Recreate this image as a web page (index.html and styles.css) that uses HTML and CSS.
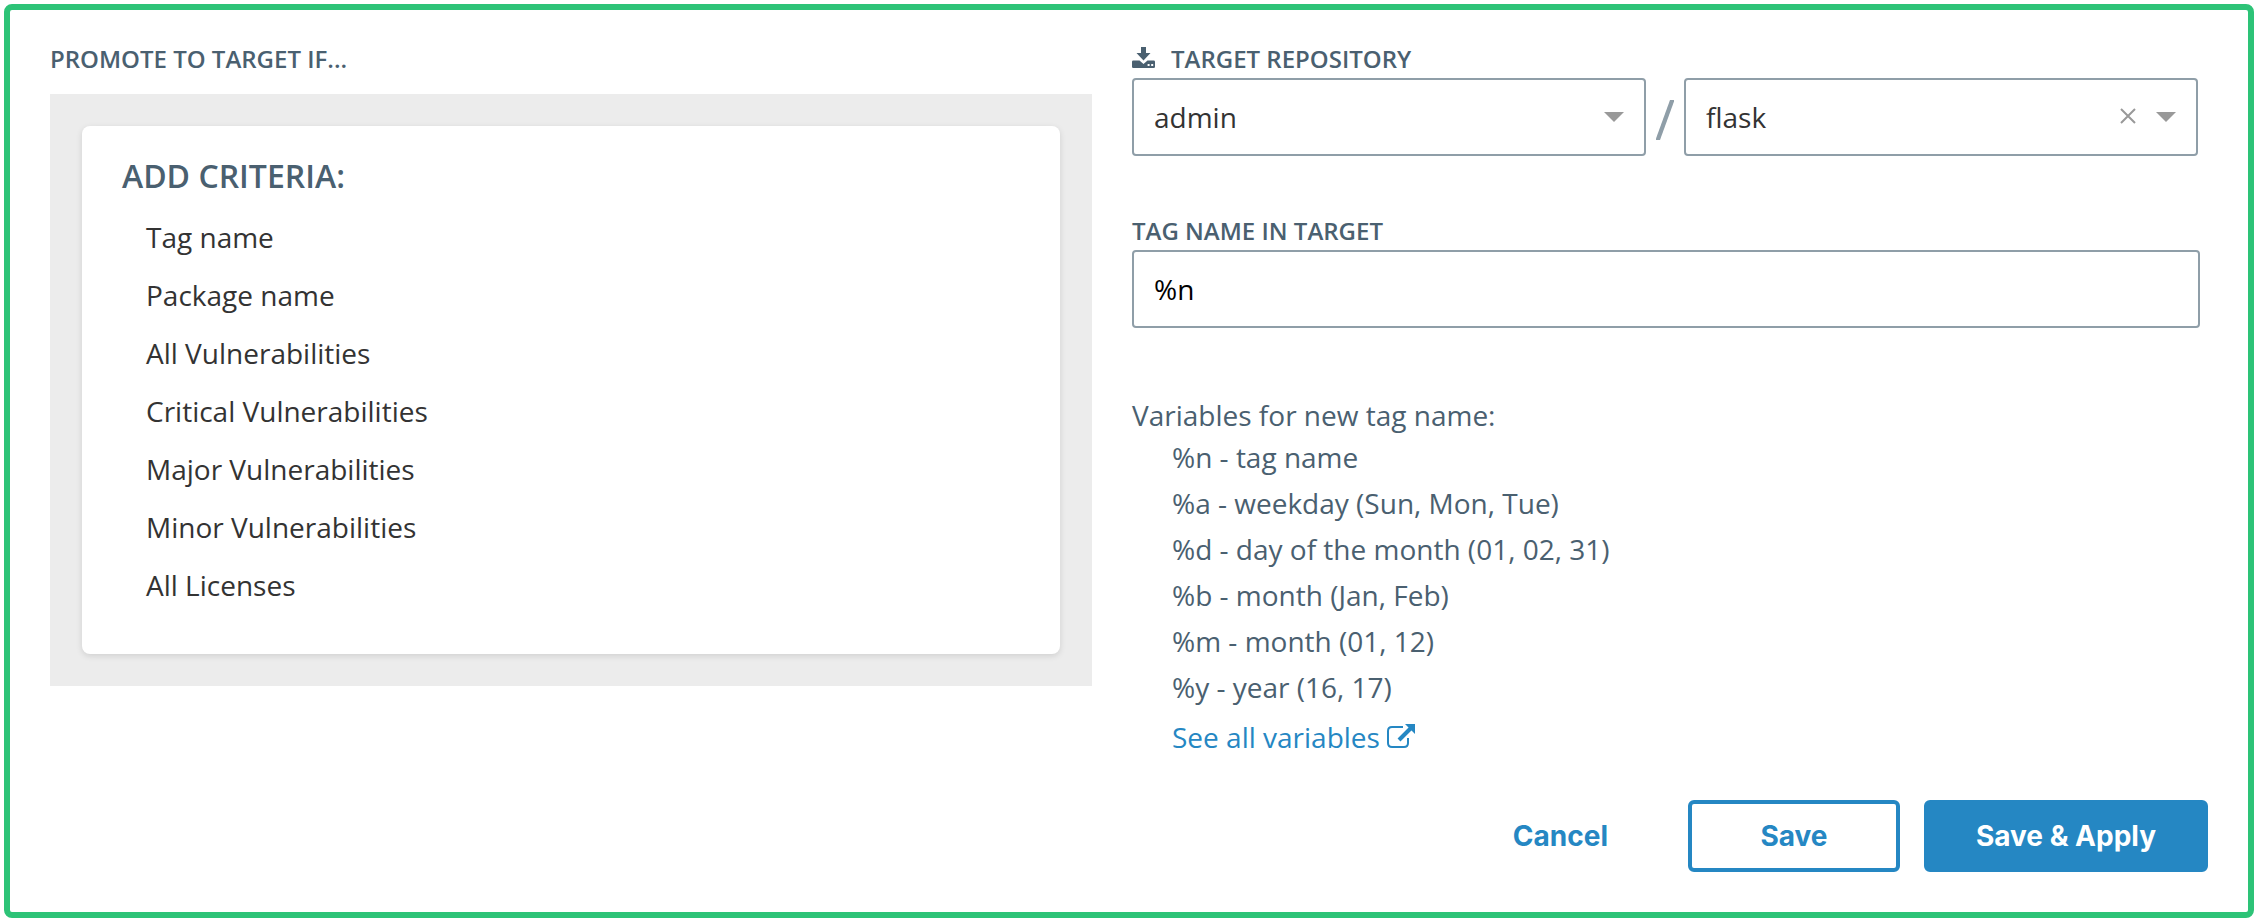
FILE: index.html
```html
<!DOCTYPE html>
<html lang="en">
<head>
<meta charset="utf-8">
<meta name="viewport" content="width=device-width, initial-scale=1">
<title>Promotion policy</title>
<link rel="stylesheet" href="styles.css">
</head>
<body>
<form class="panel">
  <div class="columns">
    <section class="criteria">
      <h2 class="label criteria-label">PROMOTE TO TARGET IF...</h2>
      <div class="well">
        <div class="card">
          <h3 class="card-title">ADD CRITERIA:</h3>
          <ul class="criteria-list">
            <li>Tag name</li>
            <li>Package name</li>
            <li>All Vulnerabilities</li>
            <li>Critical Vulnerabilities</li>
            <li>Major Vulnerabilities</li>
            <li>Minor Vulnerabilities</li>
            <li>All Licenses</li>
          </ul>
        </div>
      </div>
    </section>

    <section class="target">
      <label class="label" for="namespace">
        <svg class="label-icon" viewBox="0 0 23 24" width="23" height="24" aria-hidden="true">
          <path fill="currentColor" d="M9 0h5v6h4.500L11.500 13.500 4.500 6H9z"/>
          <path fill="currentColor" fill-rule="evenodd" d="M1.300 13.500H7.500l4 3.400 4-3.400h6.200q1.300 0 1.300 1.300v4.900q0 1.300-1.300 1.300H1.300Q0 21 0 19.700v-4.900Q0 13.500 1.300 13.500zM15.600 16.900h2v2h-2zM19.200 16.900h2v2h-2z"/>
        </svg>
        <span>TARGET REPOSITORY</span>
      </label>
      <div class="repository">
        <div class="select">
          <select class="control" id="namespace"><option>admin</option></select>
          <div class="select-tools">
            <svg viewBox="0 0 20 10" width="20" height="10" aria-hidden="true"><path fill="#999" d="M0 0h20L10 10z"/></svg>
          </div>
        </div>
        <svg class="slash" viewBox="0 0 18 46" width="18" height="46" aria-hidden="true"><path fill="currentColor" d="M14 6h4.500L4 46H-.5z"/></svg>
        <div class="select">
          <select class="control" id="repository" aria-label="Repository"><option>flask</option></select>
          <div class="select-tools">
            <button class="clear" type="button" aria-label="Clear repository">
              <svg viewBox="0 0 16 18" width="16" height="18" aria-hidden="true"><path fill="none" stroke="#999" stroke-width="2" d="M1 1l14 14M15 1L1 15"/></svg>
            </button>
            <svg viewBox="0 0 20 10" width="20" height="10" aria-hidden="true"><path fill="#999" d="M0 0h20L10 10z"/></svg>
          </div>
        </div>
      </div>

      <label class="label" for="tag">TAG NAME IN TARGET</label>
      <input class="control tag-input" id="tag" type="text" value="%n">

      <div class="variables">
        <p class="variables-title">Variables for new tag name:</p>
        <ul class="variables-list">
          <li>%n - tag name</li>
          <li>%a - weekday (Sun, Mon, Tue)</li>
          <li>%d - day of the month (01, 02, 31)</li>
          <li>%b - month (Jan, Feb)</li>
          <li>%m - month (01, 12)</li>
          <li>%y - year (16, 17)</li>
        </ul>
        <a class="more" href="#variables">See all variables
          <svg viewBox="0 0 28 24" width="28" height="24" aria-hidden="true">
            <path fill="none" stroke="currentColor" stroke-width="2" d="M16 3H5Q1 3 1 7v12q0 4 4 4h12q4 0 4-4v-5"/>
            <path fill="none" stroke="currentColor" stroke-width="4" d="M12 16L24 4"/>
            <path fill="currentColor" d="M18 0h10v10z"/>
          </svg>
        </a>
      </div>
    </section>
  </div>

  <div class="actions">
    <button class="button button-text" type="button">Cancel</button>
    <button class="button button-outline" type="button">Save</button>
    <button class="button button-solid" type="submit">Save &amp; Apply</button>
  </div>
</form>
</body>
</html>
```
FILE: styles.css
```css
* {
  box-sizing: border-box;
}

body {
  margin: 0;
  padding: 4px 6px 0 4px;
  background: #fff;
  color: #333;
  font-family: "Open Sans", "Noto Sans", sans-serif;
  font-size: 28px;
}

h2,
h3,
p,
ul {
  margin: 0;
  padding: 0;
}

ul {
  list-style: none;
}

.panel {
  padding: 32px 40px 40px;
  border: 6px solid #2dc377;
  border-radius: 8px;
}

.columns {
  display: grid;
  grid-template-columns: 1042fr 1068fr;
  gap: 40px;
  align-items: start;
  padding-right: 8px;
}

.label {
  display: flex;
  align-items: center;
  gap: 16px;
  margin-bottom: 2px;
  color: #4a6070;
  font-size: 24px;
  font-weight: 600;
  line-height: 34px;
}

.criteria-label {
  margin-bottom: 18px;
}

.well {
  padding: 32px;
  background: #ececec;
}

.card {
  padding: 28px 40px 40px;
  border-radius: 8px;
  background: #fff;
  box-shadow: 0 2px 6px rgba(0, 0, 0, 0.12);
}

.card-title {
  margin-bottom: 10px;
  color: #4a6070;
  font-size: 32px;
  font-weight: 600;
  line-height: 44px;
}

.criteria-list {
  padding-left: 24px;
  line-height: 58px;
}

.repository {
  display: flex;
  align-items: center;
  gap: 10px;
  margin-bottom: 58px;
  padding-right: 2px;
}

.select {
  position: relative;
  flex: 1;
}

.control {
  display: block;
  width: 100%;
  height: 78px;
  padding: 0 20px;
  border: 2px solid #8f9ea8;
  border-radius: 4px;
  appearance: none;
  background: #fff;
  color: #333;
  font: inherit;
}

.select-tools {
  position: absolute;
  top: 0;
  right: 22px;
  display: flex;
  align-items: center;
  gap: 20px;
  height: 78px;
}

.clear {
  display: flex;
  padding: 0;
  border: 0;
  background: none;
}

.slash {
  color: #8f9ea8;
}

.tag-input {
  color: #000;
}

.variables {
  margin-top: 68px;
  color: #4a6070;
}

.variables-title {
  line-height: 38px;
}

.variables-list {
  margin-bottom: 4px;
  padding-left: 40px;
  line-height: 46px;
}

.more {
  margin-left: 40px;
  color: #2587c3;
  line-height: 46px;
  text-decoration: none;
}

.actions {
  display: flex;
  justify-content: flex-end;
  gap: 24px;
  margin-top: 40px;
}

.button {
  height: 72px;
  padding: 0 40px;
  border: 4px solid transparent;
  border-radius: 6px;
  background: none;
  color: #2587c3;
  font-family: Inter, "Liberation Sans", sans-serif;
  font-size: 28px;
  font-weight: 700;
}

.button-text {
  padding: 0 52px;
}

.button-outline {
  min-width: 212px;
  border-color: #2587c3;
}

.button-solid {
  min-width: 284px;
  background: #2587c3;
  border-color: #2587c3;
  color: #fff;
}
```
